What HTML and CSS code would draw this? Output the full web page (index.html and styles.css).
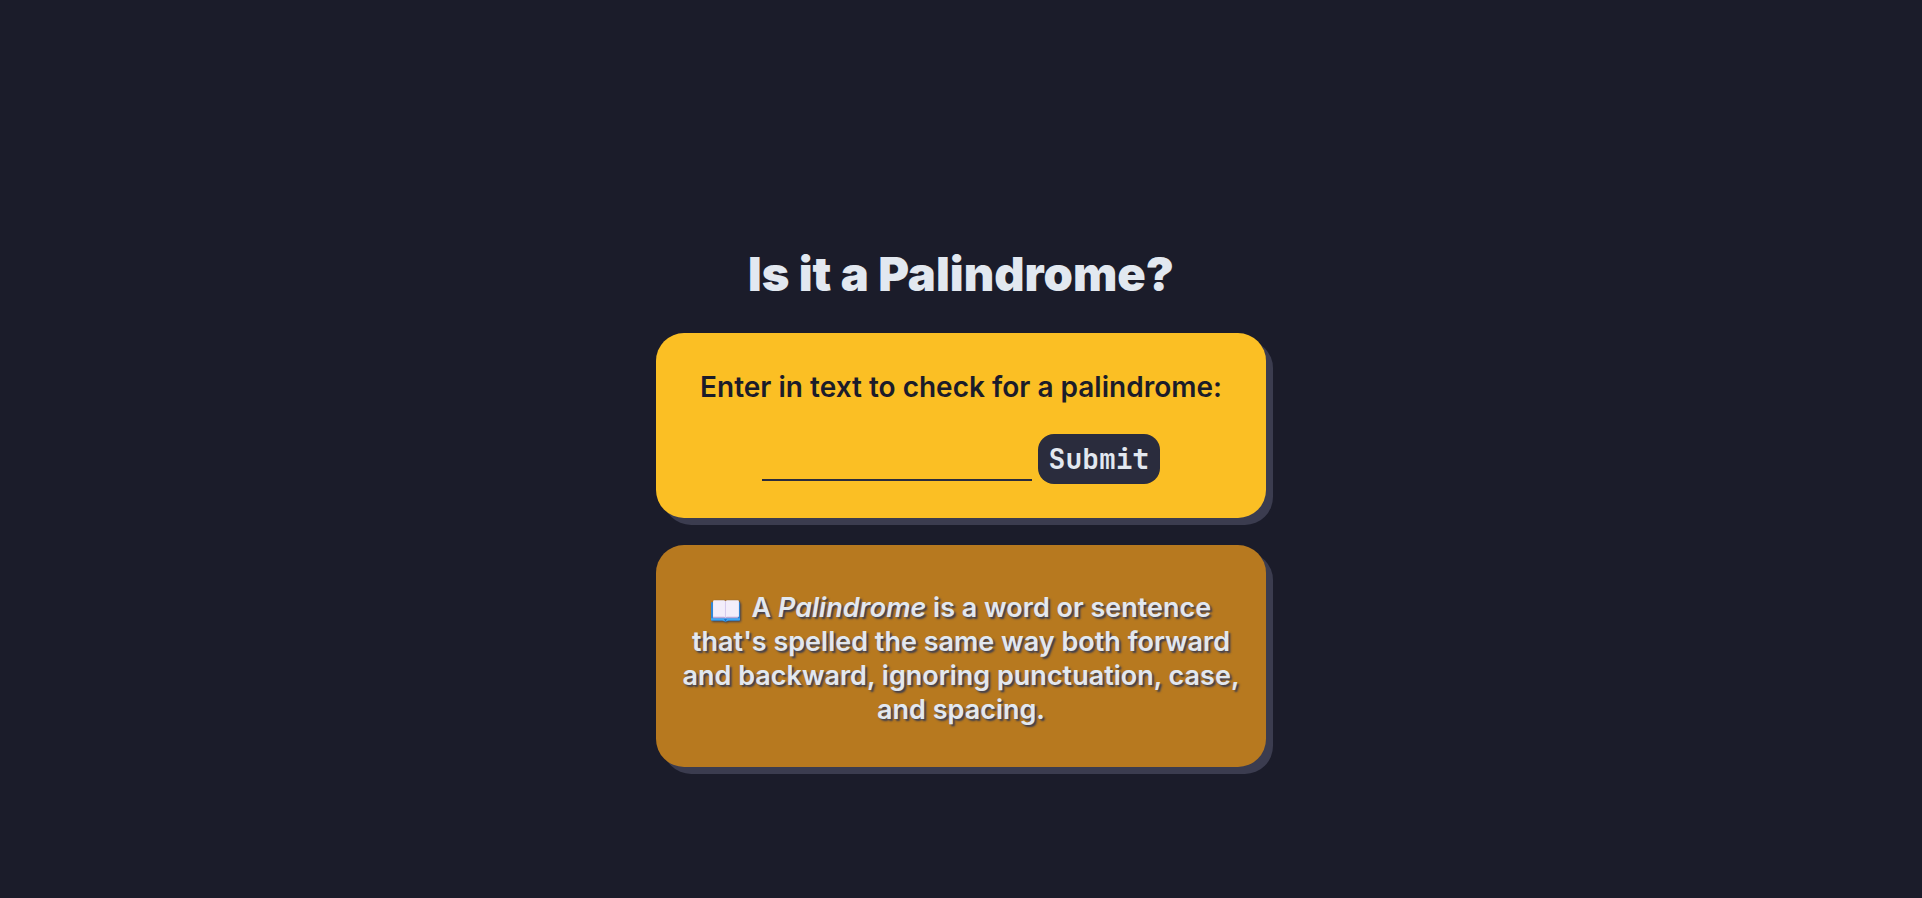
FILE: index.html
```html
<!DOCTYPE html>
<html lang="en">
<head>
  <meta charset="utf-8">
  <meta name="viewport" content="width=device-width, initial-scale=1">
  <title>Palindrome Checker</title>
  <link rel="stylesheet" href="styles.css">
</head>
<body>
  <main class="page">
    <h1 class="title">Is it a Palindrome?</h1>
    <form class="card checker">
      <label class="checker-label" for="text-input">Enter in text to check for a palindrome:</label>
      <div class="checker-row">
        <input class="checker-input" id="text-input" type="text">
        <button class="checker-button" type="submit">Submit</button>
      </div>
    </form>
    <section class="card definition">
      <p class="definition-text">
        <svg class="book" viewBox="0 0 29 23" aria-hidden="true">
          <path fill="#2f86d6" d="M0 3h28v17q0 1-1 1H17l-3 1-3-1H1q-1 0-1-1z"/>
          <path fill="#3fa9f5" d="M0 18.500h28v2H17l-3 1-3-1H0z"/>
          <path fill="#b9a9d8" d="M2 3h24v15.500H2z"/>
          <path fill="#f3eefa" d="M2 2q0-1 1-1h9.500q1.500 0 1.500 1.500v15q-.5-.5-1.500-.5H2zM27 2q0-1-1-1h-10.500q-1.500 0-1.500 1.500v15q.5-.5 1.500-.5H27z"/>
          <path fill="none" stroke="#d6cbed" d="M14 2v16"/>
          <path fill="#1c62b5" d="M12.500 19.500h3l-1.500 2z"/>
        </svg>
        A <em>Palindrome</em> is a word or sentence that's spelled the same way both forward and backward, ignoring punctuation, case, and spacing.
      </p>
    </section>
  </main>
</body>
</html>
```
FILE: styles.css
```css
* {
  box-sizing: border-box;
}

body {
  margin: 0;
  background: #1b1c2a;
  color: #e2e8f0;
  font-family: Inter, "Liberation Sans", sans-serif;
  font-size: 28px;
  line-height: 34px;
}

.page {
  display: flex;
  flex-direction: column;
  align-items: center;
  justify-content: center;
  min-height: 100vh;
  padding: 114px 16px 0;
}

.title {
  margin: 0 0 30px;
  font-size: 47px;
  font-weight: 900;
  line-height: 58px;
  text-align: center;
}

.card {
  width: 100%;
  max-width: 610px;
  border-radius: 28px;
  box-shadow: 7px 7px 0 #3b3c4f;
  text-align: center;
}

.checker {
  display: flex;
  flex-direction: column;
  align-items: center;
  gap: 30px;
  margin-bottom: 27px;
  padding: 37px 24px 34px;
  background: #fbbf24;
}

.checker-label {
  color: #1b1c2a;
  font-weight: 600;
}

.checker-row {
  display: flex;
  align-items: flex-end;
  justify-content: center;
  gap: 6px;
}

.checker-input {
  width: 270px;
  min-width: 0;
  height: 40px;
  margin: 0 0 3px;
  padding: 0;
  border: 0;
  border-bottom: 2px solid #2a2c3d;
  background: transparent;
  color: #1b1c2a;
  font: inherit;
  outline: none;
}

.checker-button {
  padding: 8px 11px;
  border: 0;
  border-radius: 16px;
  background: #2a2c3d;
  color: #e2e8f0;
  font-family: "JetBrains Mono", "DejaVu Sans Mono", monospace;
  font-size: 28px;
  font-weight: 600;
  line-height: 34px;
  cursor: pointer;
}

.definition {
  padding: 46px 24px 40px;
  background: #b7791f;
}

.definition-text {
  margin: 0;
  font-size: 27px;
  font-weight: 600;
  text-shadow: 2px 2px 2px #3b3c4f;
}

.book {
  width: 30px;
  height: 24px;
  margin-right: 4px;
  vertical-align: -6px;
  filter: drop-shadow(1px 1px 1px #3b3c4f);
}
```
